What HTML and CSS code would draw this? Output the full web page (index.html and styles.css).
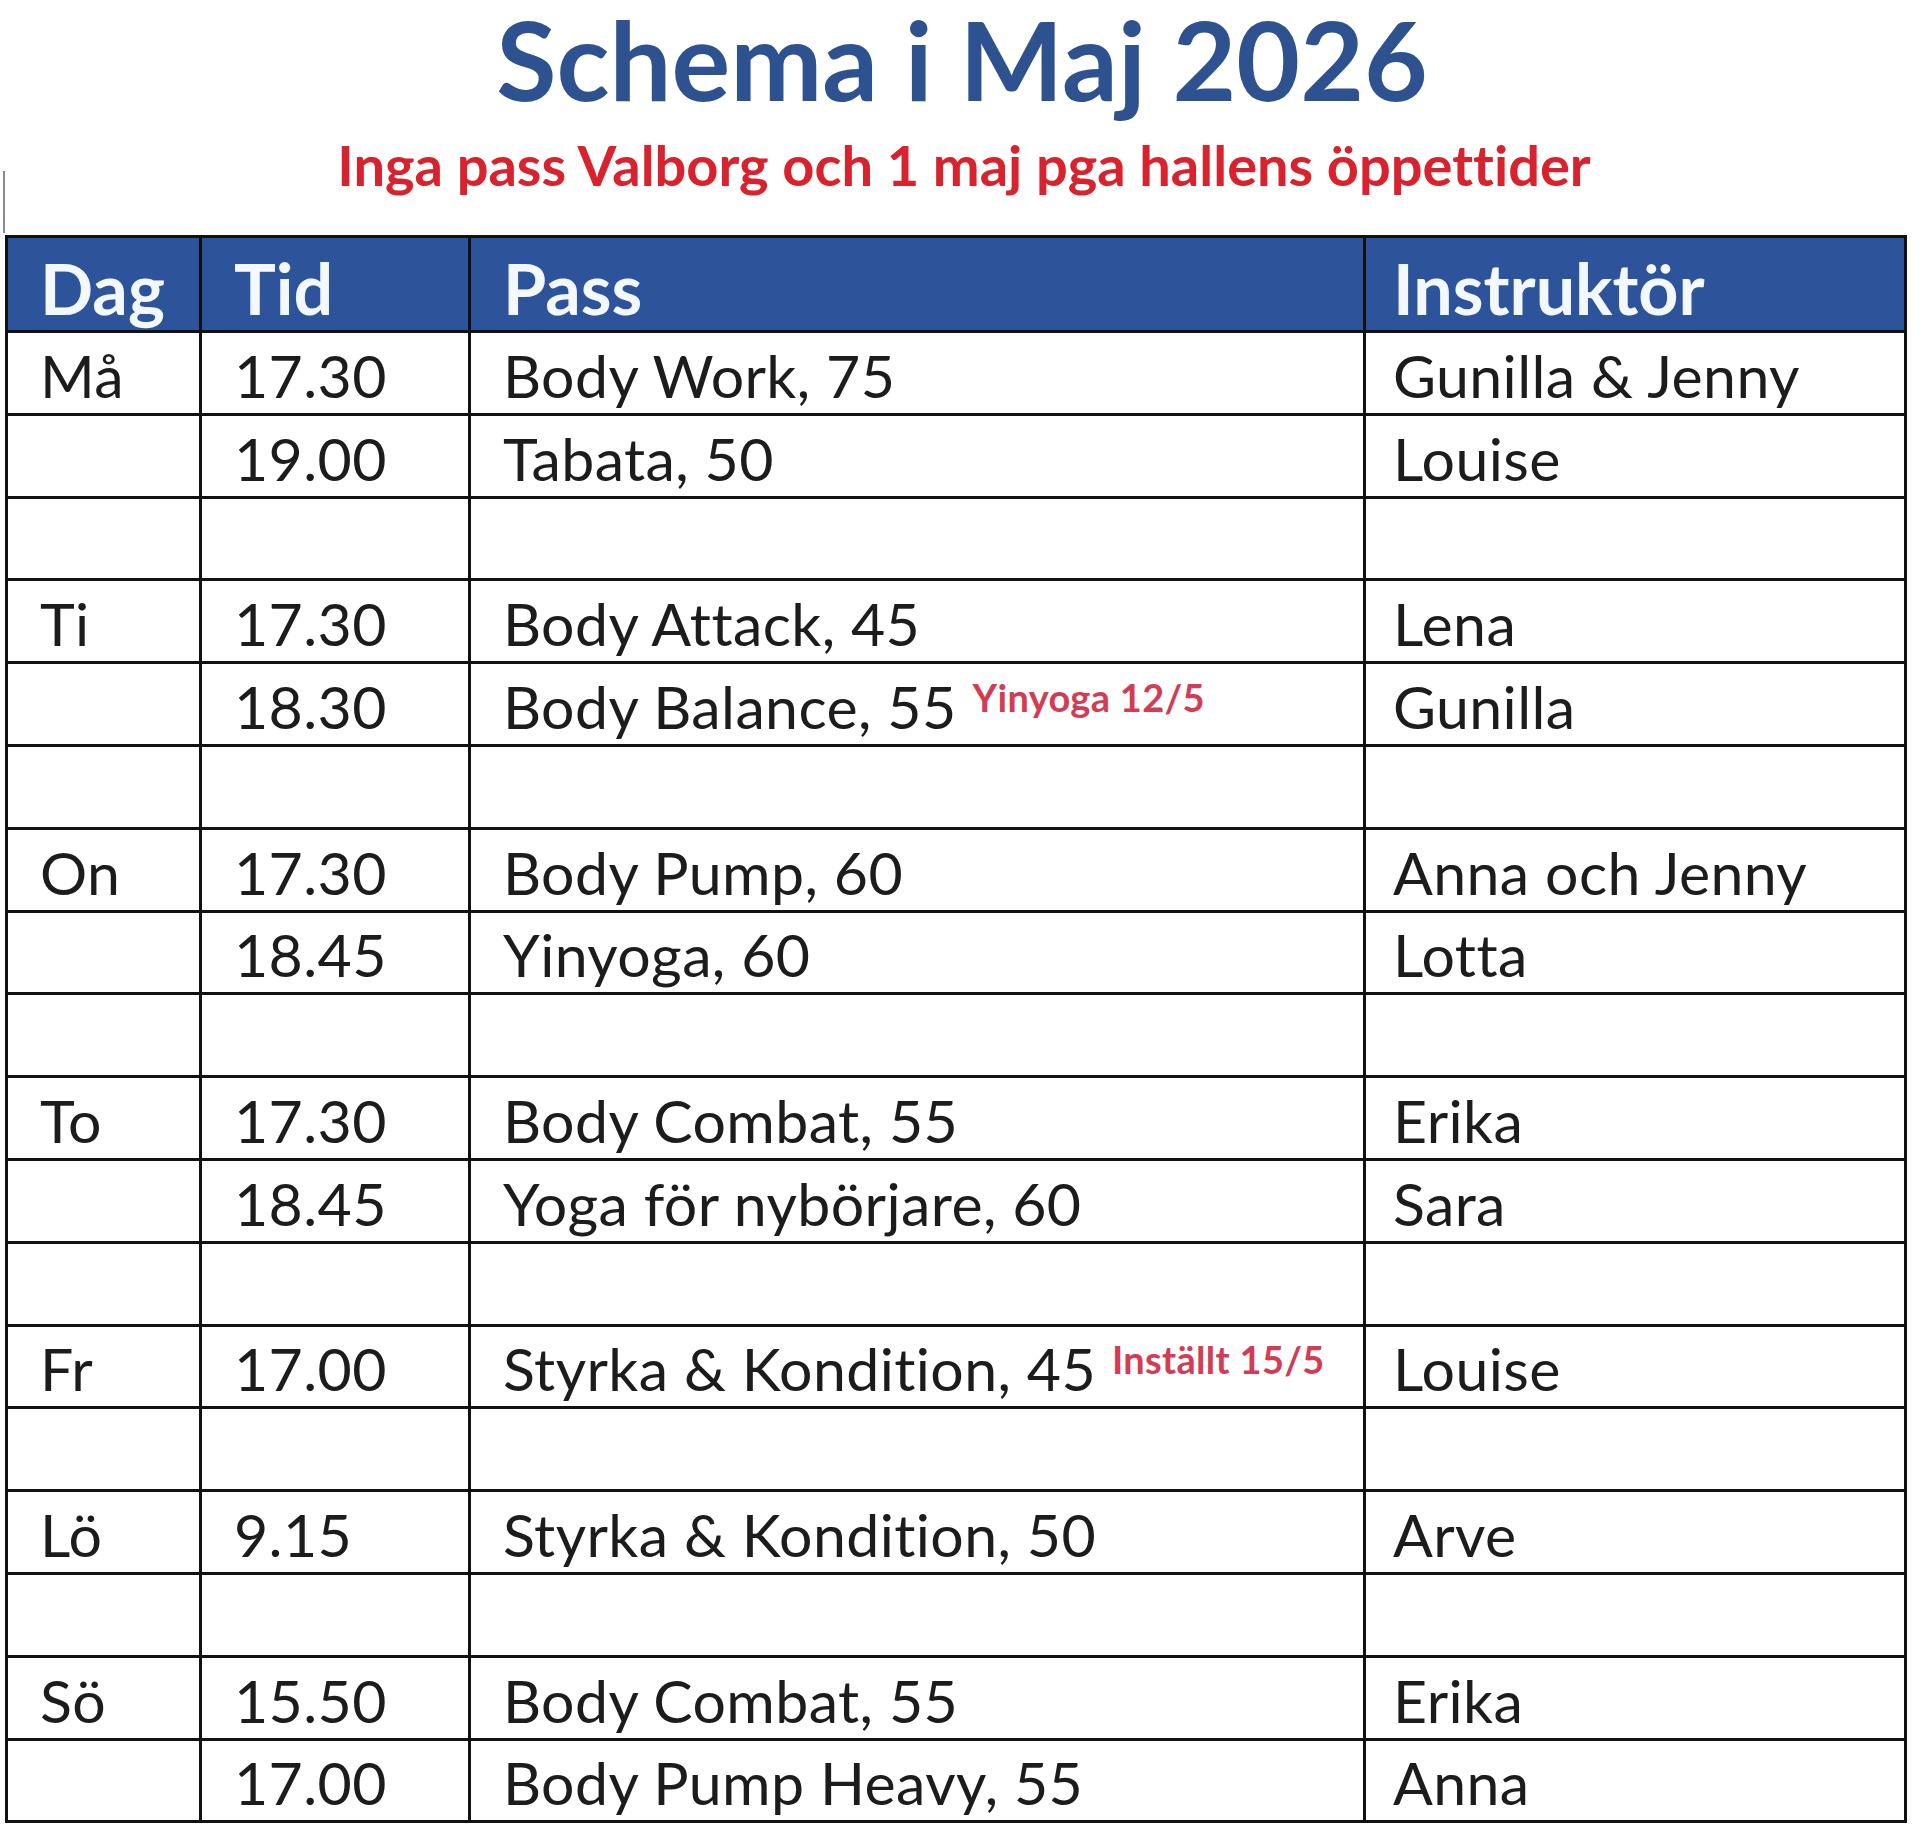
FILE: index.html
```html
<!DOCTYPE html>
<html lang="sv">
<head>
<meta charset="utf-8">
<title>Schema i Maj 2026</title>
<link rel="stylesheet" href="styles.css">
</head>
<body>
<main class="page">
  <header class="heading">
    <h1 class="title">Schema i Maj 2026</h1>
    <p class="subtitle">Inga pass Valborg och 1 maj pga hallens öppettider</p>
  </header>
  <table class="schedule">
    <colgroup>
      <col class="c-dag">
      <col class="c-tid">
      <col class="c-pass">
      <col class="c-instr">
    </colgroup>
    <thead>
      <tr><th>Dag</th><th>Tid</th><th>Pass</th><th class="instr">Instruktör</th></tr>
    </thead>
    <tbody>
      <tr><td>Må</td><td>17.30</td><td>Body Work, 75</td><td class="instr">Gunilla &amp; Jenny</td></tr>
      <tr><td></td><td>19.00</td><td>Tabata, 50</td><td class="instr">Louise</td></tr>
      <tr><td></td><td></td><td></td><td class="instr"></td></tr>
      <tr><td>Ti</td><td>17.30</td><td>Body Attack, 45</td><td class="instr">Lena</td></tr>
      <tr><td></td><td>18.30</td><td>Body Balance, 55<span class="note">Yinyoga 12/5</span></td><td class="instr">Gunilla</td></tr>
      <tr><td></td><td></td><td></td><td class="instr"></td></tr>
      <tr><td>On</td><td>17.30</td><td>Body Pump, 60</td><td class="instr">Anna och Jenny</td></tr>
      <tr><td></td><td>18.45</td><td>Yinyoga, 60</td><td class="instr">Lotta</td></tr>
      <tr><td></td><td></td><td></td><td class="instr"></td></tr>
      <tr><td>To</td><td>17.30</td><td>Body Combat, 55</td><td class="instr">Erika</td></tr>
      <tr><td></td><td>18.45</td><td>Yoga för nybörjare, 60</td><td class="instr">Sara</td></tr>
      <tr><td></td><td></td><td></td><td class="instr"></td></tr>
      <tr><td>Fr</td><td>17.00</td><td>Styrka &amp; Kondition, 45<span class="note">Inställt 15/5</span></td><td class="instr">Louise</td></tr>
      <tr><td></td><td></td><td></td><td class="instr"></td></tr>
      <tr><td>Lö</td><td>9.15</td><td>Styrka &amp; Kondition, 50</td><td class="instr">Arve</td></tr>
      <tr><td></td><td></td><td></td><td class="instr"></td></tr>
      <tr><td>Sö</td><td>15.50</td><td>Body Combat, 55</td><td class="instr">Erika</td></tr>
      <tr><td></td><td>17.00</td><td>Body Pump Heavy, 55</td><td class="instr">Anna</td></tr>
    </tbody>
  </table>
</main>
</body>
</html>
```
FILE: styles.css
```css
* { box-sizing: border-box; }

html, body {
  margin: 0;
  padding: 0;
  background: #ffffff;
}

body {
  font-family: Lato, "Liberation Sans", Arial, sans-serif;
  color: #1c1c1c;
  font-variant-ligatures: none;
}

.page {
  width: 1920px;
  height: 1824px;
  overflow: hidden;
}

.heading {
  text-align: center;
}

.title {
  margin: 0;
  padding: 6px 0 0 4px;
  height: 116px;
  font-size: 110px;
  line-height: 104px;
  font-weight: 700;
  color: #2e5190;
  letter-spacing: 0;
}

.subtitle {
  margin: 0;
  padding-bottom: 21px;
  padding-left: 8px;
  font-size: 56px;
  line-height: 98px;
  font-weight: 700;
  color: #d8222d;
  letter-spacing: 0;
  background: linear-gradient(#8a8a8a, #8a8a8a) no-repeat 3px 55px / 2px 62px;
}

.schedule {
  margin-left: 5px;
  width: 1899px;
  table-layout: fixed;
  border-collapse: collapse;
  border: 3px solid #111;
}

.c-dag { width: 194px; }
.c-tid { width: 269px; }
.c-pass { width: 895px; }
.c-instr { width: 541px; }

.schedule th,
.schedule td {
  border: 3px solid #111;
  text-align: left;
  vertical-align: bottom;
  padding: 0 0 8px 32px;
  white-space: nowrap;
}

.schedule th.instr,
.schedule td.instr {
  padding-left: 27px;
}

.schedule thead tr {
  height: 95px;
}

.schedule th {
  background: #2d549a;
  color: #f3f8ff;
  font-size: 70px;
  line-height: 1;
  font-weight: 700;
  padding-bottom: 7px;
}

.schedule tbody tr {
  height: 82.8px;
}

.schedule td {
  font-size: 59px;
  line-height: 1;
  font-weight: 400;
  letter-spacing: 0.4px;
}

.note {
  margin-left: 16px;
  font-size: 38px;
  font-weight: 700;
  color: #d23c54;
  vertical-align: 17px;
  letter-spacing: 0.3px;
}
```
